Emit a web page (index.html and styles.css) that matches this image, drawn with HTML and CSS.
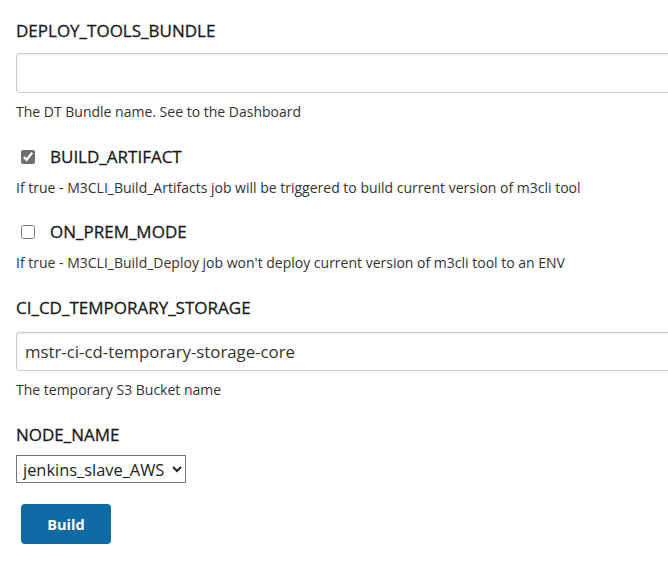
FILE: index.html
```html
<!DOCTYPE html>
<html>
<head>
<meta charset="utf-8">
<link rel="stylesheet" href="styles.css">
</head>
<body>
<form class="params">
  <div class="field">
    <div class="label">DEPLOY_TOOLS_BUNDLE</div>
    <input class="text" type="text" value="">
    <div class="desc">The DT Bundle name. See to the Dashboard</div>
  </div>
  <div class="field check">
    <label class="check-row"><input type="checkbox" checked><span class="label">BUILD_ARTIFACT</span></label>
    <div class="desc">If true - M3CLI_Build_Artifacts job will be triggered to build current version of m3cli tool</div>
  </div>
  <div class="field check">
    <label class="check-row"><input type="checkbox"><span class="label">ON_PREM_MODE</span></label>
    <div class="desc">If true - M3CLI_Build_Deploy job won't deploy current version of m3cli tool to an ENV</div>
  </div>
  <div class="field">
    <div class="label">CI_CD_TEMPORARY_STORAGE</div>
    <input class="text" type="text" value="mstr-ci-cd-temporary-storage-core">
    <div class="desc">The temporary S3 Bucket name</div>
  </div>
  <div class="field">
    <div class="label">NODE_NAME</div>
    <select class="sel"><option>jenkins_slave_AWS</option></select>
  </div>
  <button class="build" type="button">Build</button>
</form>
</body>
</html>
```
FILE: styles.css
```css
html, body { margin: 0; padding: 0; background: #fff; }
body { font-family: "Open Sans", "Noto Sans", sans-serif; color: #333; }
.params { padding: 20px 0 0 16px; display: flex; flex-direction: column; align-items: flex-start; }
.field { width: 100%; }
.label { font-size: 17px; font-weight: 400; -webkit-text-stroke: 0.3px #1a1a1a; color: #1a1a1a; line-height: 22px; display: block; }
.text {
  display: block; box-sizing: border-box; width: 700px; height: 40px; margin: 11px 0 0 0;
  border: 1px solid #ccc; border-radius: 3px; box-shadow: inset 0 1px 2px rgba(0,0,0,0.08);
  padding: 0 8px; font-family: inherit; font-size: 16.8px; color: #333; outline: none;
}
.field:nth-child(4) .text { height: 39px; margin-top: 13px; }
.desc { font-size: 14px; line-height: 20px; color: #333; margin-top: 9px; margin-bottom: 0; }
.field.check .desc { margin-top: 10px; }
.field + .field { margin-top: 24px; }
.field.check + .field.check { margin-top: 23px; }
.check-row { display: flex; align-items: center; gap: 15px; padding-left: 5px; }
.check-row input { margin: 0; width: 14px; height: 14px; accent-color: #707070; }
.sel {
  margin-top: 9px; box-sizing: border-box; width: 170px; height: 28px; font-family: inherit; font-size: 16.4px; color: #222;
  border: 1px solid #767676; border-radius: 0; background: #fff; padding: 0 2px;
}
.build {
  margin: 21px 0 0 5px; width: 90px; height: 40px; border: none; border-radius: 4px;
  background: #0f6ba3; color: #fff; font-family: inherit; font-weight: 700; font-size: 14.5px;
}
```
